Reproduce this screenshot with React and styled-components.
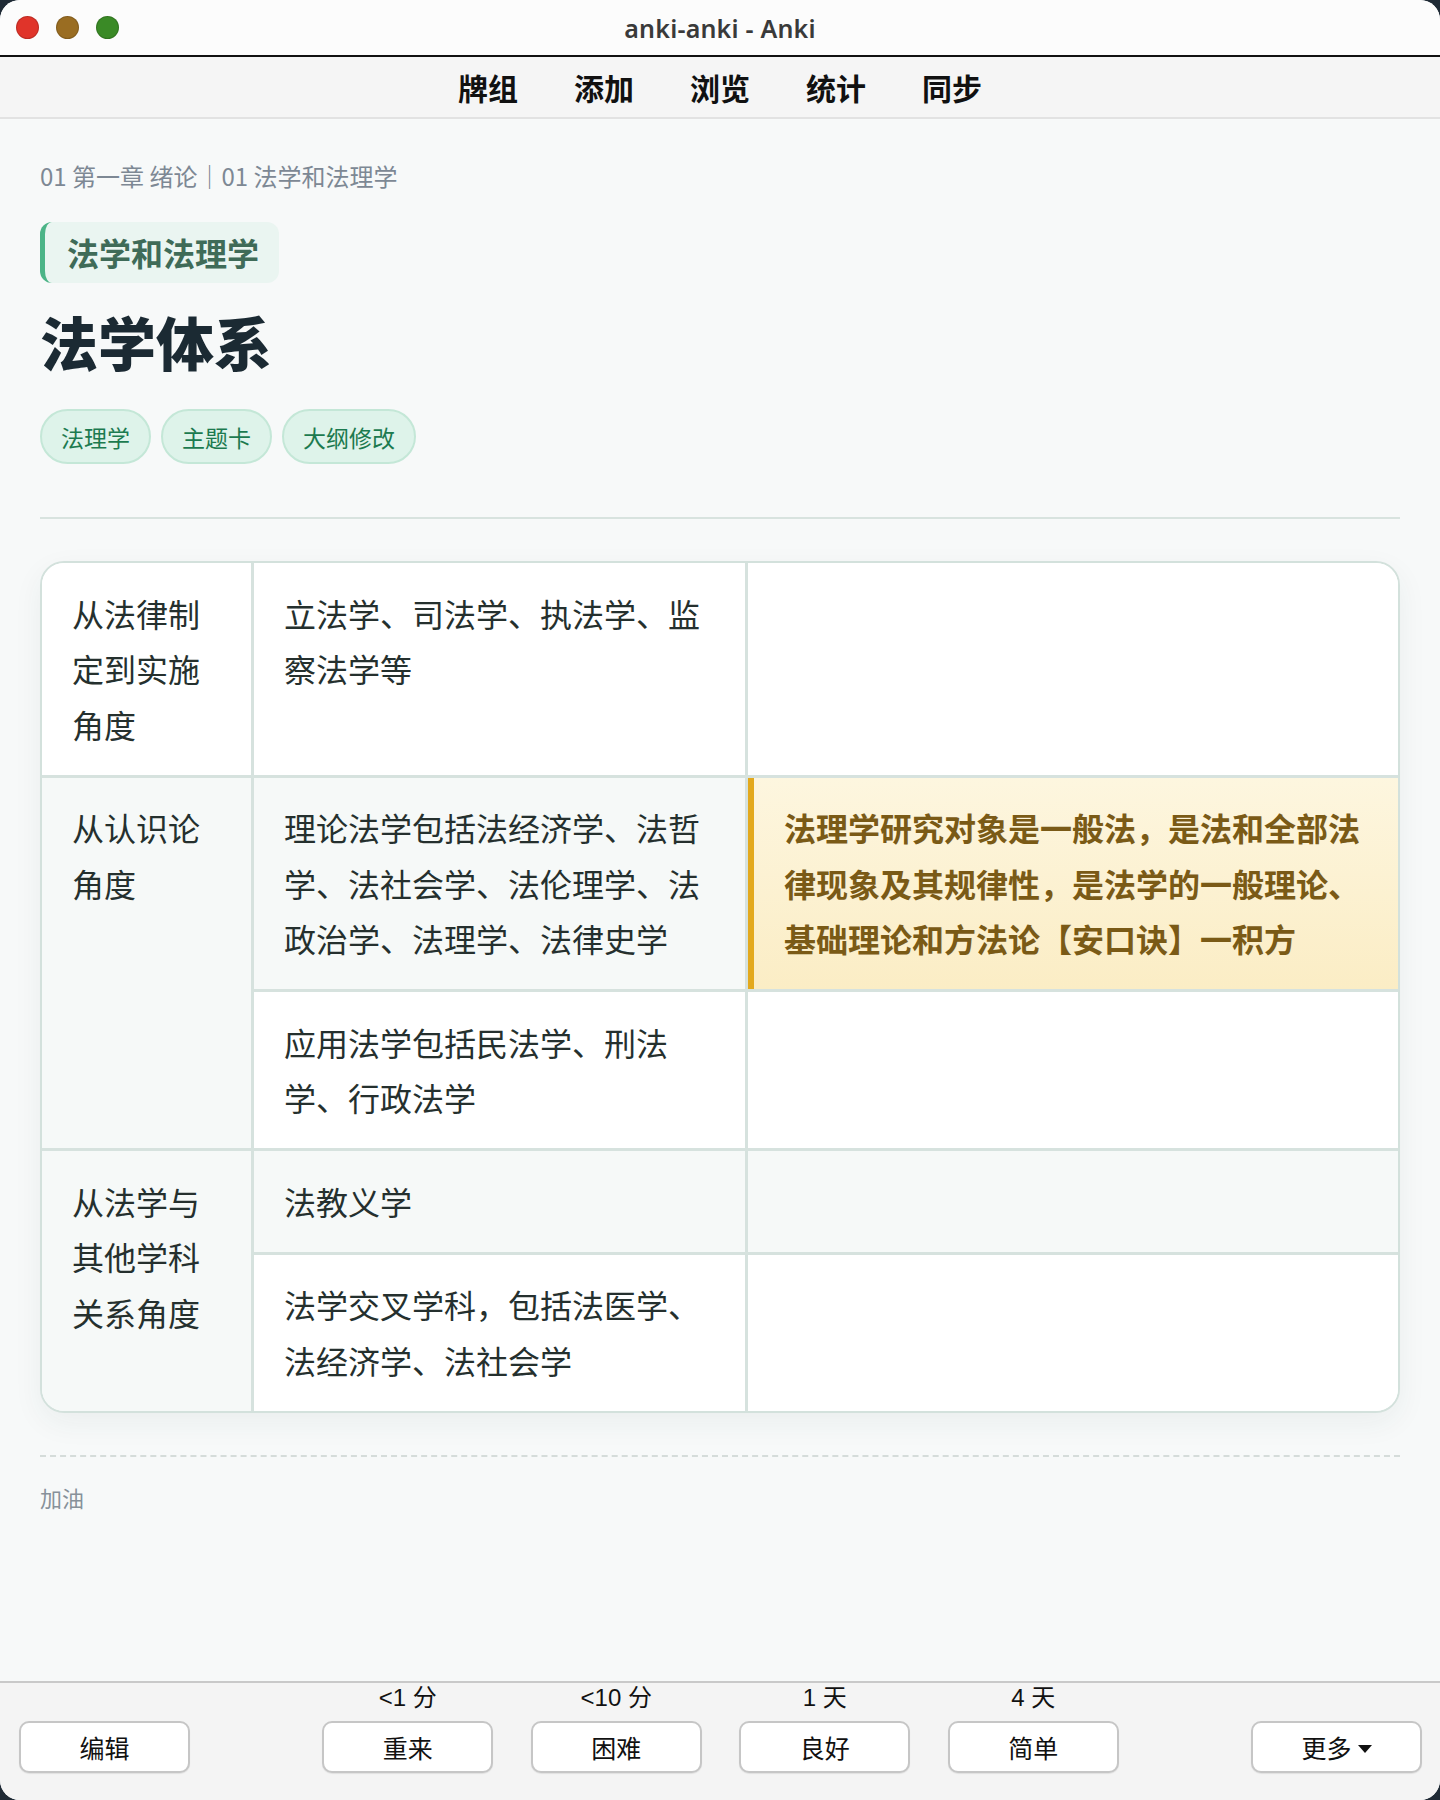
import React from "react";
import styled, { createGlobalStyle } from "styled-components";

const GlobalStyle = createGlobalStyle`
  html, body {
    margin: 0;
    padding: 0;
    background: #1f2a35;
  }
  * {
    box-sizing: border-box;
  }
`;

const FONT = `"Noto Sans CJK SC", "Noto Sans", sans-serif`;

const Window = styled.div`
  width: 1440px;
  height: 1800px;
  border-radius: 20px;
  overflow: hidden;
  display: flex;
  flex-direction: column;
  background: #f7f9f9;
  font-family: ${FONT};
`;

const TitleBar = styled.div`
  position: relative;
  height: 57px;
  flex: none;
  display: flex;
  align-items: center;
  justify-content: center;
  background: #fcfcfc;
  border-bottom: 2px solid #111;
`;

const Lights = styled.div`
  position: absolute;
  left: 16px;
  top: 16px;
  display: flex;
  gap: 17px;
`;

const Light = styled.span`
  width: 23px;
  height: 23px;
  border-radius: 50%;
  background: ${(p) => p.$color};
  border: 1px solid rgba(0, 0, 0, 0.15);
`;

const WindowTitle = styled.div`
  font-family: "Noto Sans", sans-serif;
  font-size: 25px;
  font-weight: 600;
  color: #3a3a3a;
  letter-spacing: 0.2px;
`;

const Toolbar = styled.nav`
  height: 62px;
  flex: none;
  display: flex;
  align-items: center;
  justify-content: center;
  gap: 56px;
  background: #f5f5f5;
  border-bottom: 2px solid #e2e2e2;
`;

const NavItem = styled.span`
  font-size: 30px;
  font-weight: 700;
  color: #111;
`;

const Content = styled.main`
  flex: 1;
  padding: 40px 40px 0;
  background: #f7f9f9;
`;

const Breadcrumb = styled.div`
  font-size: 24px;
  line-height: 34px;
  color: #7d8894;
`;

const ChapterPill = styled.div`
  display: inline-block;
  margin-top: 29px;
  padding: 9px 20px 10px 22px;
  border-left: 5px solid #4cb487;
  border-radius: 12px;
  background: #eaf5f1;
  font-size: 32px;
  line-height: 42px;
  font-weight: 700;
  color: #3f6b58;
`;

const Heading = styled.h1`
  margin: 22px 0 0;
  font-size: 58px;
  line-height: 73px;
  font-weight: 800;
  color: #1b2a33;
`;

const Tags = styled.div`
  margin-top: 31px;
  display: flex;
  gap: 10px;
`;

const Tag = styled.span`
  height: 55px;
  padding: 0 19px;
  display: flex;
  align-items: center;
  border-radius: 28px;
  background: #def3ea;
  border: 2px solid #c4e7d7;
  font-size: 23px;
  color: #1c7a4f;
`;

const Rule = styled.hr`
  margin: 53px 0 0;
  border: none;
  border-top: 2px solid #d8e3df;
`;

const Table = styled.table`
  margin-top: 42px;
  width: 100%;
  table-layout: fixed;
  border-collapse: separate;
  border-spacing: 0;
  border: 2px solid #d3e1dc;
  border-radius: 24px;
  overflow: hidden;
  background: #fff;
  box-shadow: 0 10px 30px rgba(40, 70, 60, 0.06);
`;

const Cell = styled.td`
  vertical-align: top;
  padding: 22.5px 30px;
  font-size: 32px;
  line-height: 55.5px;
  color: #25302e;
  background: ${(p) => (p.$shade ? "#f6f9f8" : "#fff")};
  border-right: ${(p) => (p.$lastCol ? "none" : "3px solid #d6e2de")};
  border-bottom: ${(p) => (p.$lastRow ? "none" : "3px solid #d6e2de")};
`;

const KeyCell = styled(Cell)`
  font-weight: 700;
  color: #7a5a16;
  background: linear-gradient(180deg, #fdf6df 0%, #fbedc5 100%);
  box-shadow: inset 6px 0 0 #e3a91d;
  padding-left: 36px;
`;

const Dashed = styled.div`
  margin-top: 42px;
  border-top: 2px dashed #d5dcda;
`;

const Footnote = styled.div`
  margin-top: 23px;
  font-size: 22px;
  line-height: 34px;
  color: #87919a;
`;

const BottomBar = styled.footer`
  height: 119px;
  flex: none;
  display: flex;
  align-items: flex-end;
  justify-content: space-between;
  padding: 0 18px 27px 19px;
  background: #f4f4f4;
  border-top: 2px solid #c9c9c9;
`;

const Answers = styled.div`
  display: flex;
  gap: 37.5px;
`;

const AnswerCol = styled.div`
  display: flex;
  flex-direction: column;
  align-items: center;
  gap: 9px;
`;

const Interval = styled.span`
  font-family: "Liberation Sans", "Noto Sans CJK SC", sans-serif;
  font-size: 24px;
  line-height: 28px;
  color: #111;
`;

const Button = styled.button`
  width: 171px;
  height: 52px;
  display: flex;
  align-items: center;
  justify-content: center;
  gap: 6px;
  background: #fff;
  border: 2px solid #c6c6c6;
  border-radius: 10px;
  font-family: ${FONT};
  font-size: 25px;
  color: #111;
  box-shadow: 0 1px 1px rgba(0, 0, 0, 0.08);
`;

const Caret = styled.span`
  width: 0;
  height: 0;
  border-left: 7px solid transparent;
  border-right: 7px solid transparent;
  border-top: 8px solid #111;
  margin-top: 3px;
`;

const answers = [
  { ivl: "<1 分", label: "重来" },
  { ivl: "<10 分", label: "困难" },
  { ivl: "1 天", label: "良好" },
  { ivl: "4 天", label: "简单" },
];

export default function App() {
  return (
    <>
      <GlobalStyle />
      <Window>
        <TitleBar>
          <Lights>
            <Light $color="#e0342a" />
            <Light $color="#9a6d22" />
            <Light $color="#3a8a26" />
          </Lights>
          <WindowTitle>anki-anki - Anki</WindowTitle>
        </TitleBar>
        <Toolbar>
          <NavItem>牌组</NavItem>
          <NavItem>添加</NavItem>
          <NavItem>浏览</NavItem>
          <NavItem>统计</NavItem>
          <NavItem>同步</NavItem>
        </Toolbar>
        <Content>
          <Breadcrumb>01 第一章 绪论｜01 法学和法理学</Breadcrumb>
          <ChapterPill>法学和法理学</ChapterPill>
          <Heading>法学体系</Heading>
          <Tags>
            <Tag>法理学</Tag>
            <Tag>主题卡</Tag>
            <Tag>大纲修改</Tag>
          </Tags>
          <Rule />
          <Table>
            <colgroup>
              <col style={{ width: 212 }} />
              <col style={{ width: 494 }} />
              <col />
            </colgroup>
            <tbody>
              <tr>
                <Cell>从法律制定到实施角度</Cell>
                <Cell>立法学、司法学、执法学、监察法学等</Cell>
                <Cell $lastCol />
              </tr>
              <tr>
                <Cell rowSpan={2} $shade>从认识论角度</Cell>
                <Cell $shade>理论法学包括法经济学、法哲学、法社会学、法伦理学、法政治学、法理学、法律史学</Cell>
                <KeyCell $lastCol>
                  法理学研究对象是一般法，是法和全部法律现象及其规律性，是法学的一般理论、基础理论和方法论【安口诀】一积方
                </KeyCell>
              </tr>
              <tr>
                <Cell>应用法学包括民法学、刑法学、行政法学</Cell>
                <Cell $lastCol />
              </tr>
              <tr>
                <Cell rowSpan={2} $shade $lastRow>从法学与其他学科关系角度</Cell>
                <Cell $shade>法教义学</Cell>
                <Cell $shade $lastCol />
              </tr>
              <tr>
                <Cell $lastRow>法学交叉学科，包括法医学、法经济学、法社会学</Cell>
                <Cell $lastRow $lastCol />
              </tr>
            </tbody>
          </Table>
          <Dashed />
          <Footnote>加油</Footnote>
        </Content>
        <BottomBar>
          <Button>编辑</Button>
          <Answers>
            {answers.map((a) => (
              <AnswerCol key={a.label}>
                <Interval>{a.ivl}</Interval>
                <Button>{a.label}</Button>
              </AnswerCol>
            ))}
          </Answers>
          <Button>
            更多
            <Caret />
          </Button>
        </BottomBar>
      </Window>
    </>
  );
}
